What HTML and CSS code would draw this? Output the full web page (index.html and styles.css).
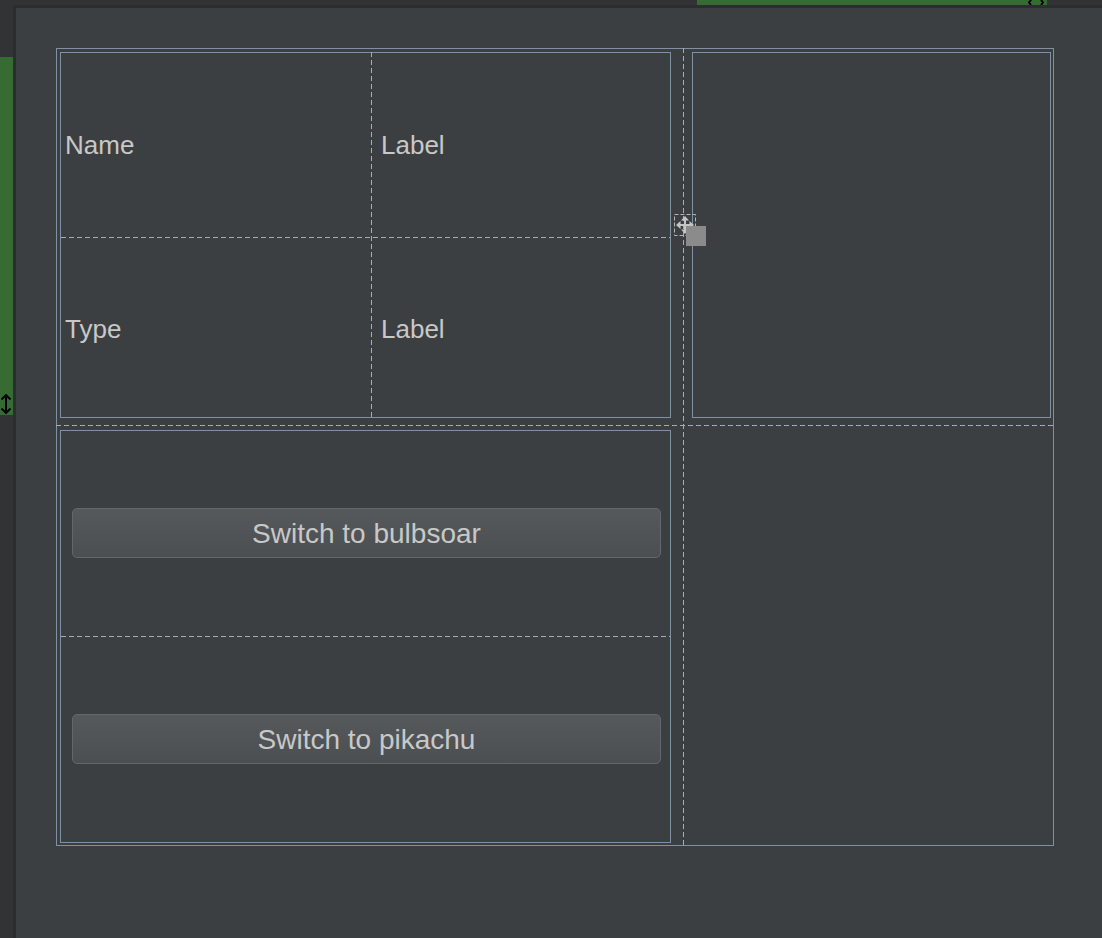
FILE: index.html
```html
<!DOCTYPE html>
<html>
<head>
<meta charset="utf-8">
<link rel="stylesheet" href="styles.css">
</head>
<body>
<div class="app">
  <div class="left-strip">
    <div class="green-left">
      <svg class="arrow-v" width="12" height="20" viewBox="0 0 12 20"><path d="M6 1 L6 19 M1.5 5.5 L6 1 L10.5 5.5 M1.5 14.5 L6 19 L10.5 14.5" fill="none" stroke="#000" stroke-width="2"/></svg>
    </div>
  </div>
  <div class="top-strip">
    <div class="green-top">
      <svg class="arrow-h" width="16" height="5" viewBox="0 0 16 5"><path d="M3 0 L1 2.5 L3 5 M13 0 L15 2.5 L13 5" fill="none" stroke="#000" stroke-width="2"/></svg>
    </div>
  </div>
  <div class="hsep"></div>
  <div class="vsep"></div>
  <div class="canvas">
    <div class="form">
      <div class="cell">
        <div class="panel panel-info">
          <div class="fcell name">Name</div>
          <div class="vd vd-info"></div>
          <div class="fcell label">Label</div>
          <div class="hd hd-info"></div>
          <div class="fcell name row2">Type</div>
          <div class="fcell label row2">Label</div>
        </div>
      </div>
      <div class="vdash"></div>
      <div class="cell">
        <div class="panel panel-image"></div>
      </div>
      <div class="hdash"></div>
      <div class="cell">
        <div class="panel panel-buttons">
          <div class="brow"><button class="btn">Switch to bulbsoar</button></div>
          <div class="hd"></div>
          <div class="brow"><button class="btn">Switch to pikachu</button></div>
        </div>
      </div>
      <div class="cell"></div>
      <div class="handle">
        <svg width="22" height="22" viewBox="0 0 22 22"><rect x="0.5" y="0.5" width="21" height="21" fill="none" stroke="#b4b4b4" stroke-width="1" stroke-dasharray="4 2"/><path d="M11 3 L11 19 M3 11 L19 11" stroke="#c4c4c4" stroke-width="2" fill="none"/><path d="M11 2 L7 6.5 L15 6.5 Z M11 20 L7 15.5 L15 15.5 Z M2 11 L6.5 7 L6.5 15 Z M20 11 L15.5 7 L15.5 15 Z" fill="#c4c4c4"/></svg>
      </div>
      <div class="grip"></div>
    </div>
  </div>
</div>
</body>
</html>
```
FILE: styles.css
```css
html, body {
  margin: 0;
  padding: 0;
  background: #313335;
}
body {
  font-family: "Liberation Sans", Arial, sans-serif;
  color: #c8c8c8;
  overflow: hidden;
}
.app {
  width: 1102px;
  height: 938px;
  display: grid;
  grid-template-columns: 13px 3px 1086px;
  grid-template-rows: 5px 3px 930px;
}
.left-strip {
  grid-column: 1;
  grid-row: 1 / 4;
  background: #313335;
}
.green-left {
  margin-top: 57px;
  height: 358px;
  background: #366b34;
  display: flex;
  flex-direction: column;
  justify-content: flex-end;
  align-items: flex-start;
}
.arrow-v {
  display: block;
  margin: 0 0 1px 0;
}
.top-strip {
  grid-column: 2 / 4;
  grid-row: 1;
  background: #313335;
}
.green-top {
  margin-left: 684px;
  width: 350px;
  height: 5px;
  background: #366b34;
  display: flex;
  justify-content: flex-end;
}
.arrow-h {
  display: block;
  margin-right: 3px;
}
.hsep {
  grid-column: 3;
  grid-row: 2;
  background: #2b2d2f;
}
.vsep {
  grid-column: 2;
  grid-row: 2 / 4;
  background: #2b2d2f;
}
.canvas {
  grid-column: 3;
  grid-row: 3;
  background: #3c3f41;
  padding: 40px;
}
.form {
  position: relative;
  box-sizing: border-box;
  width: 998px;
  height: 798px;
  border: 1px solid #8190a3;
  display: grid;
  grid-template-columns: 626px 1px 369px;
  grid-template-rows: 376px 1px 419px;
}
.cell {
  min-width: 0;
  min-height: 0;
}
.vdash {
  grid-column: 2;
  grid-row: 1 / 4;
  margin: -1px 0;
  background: repeating-linear-gradient(to bottom, #a4acb8 0 5px, transparent 5px 8px);
}
.hdash {
  grid-column: 1 / 4;
  grid-row: 2;
  margin: 0 -1px;
  background: repeating-linear-gradient(to right, #a4acb8 0 5px, transparent 5px 8px);
}
.panel {
  box-sizing: border-box;
  border: 1px solid #8190a3;
}
.panel-info {
  margin: 3px 0 0 3px;
  width: 611px;
  height: 366px;
  display: grid;
  grid-template-columns: 310px 1px 298px;
  grid-template-rows: 184px 1px 179px;
}
.vd-info {
  grid-column: 2;
  grid-row: 1 / 4;
  margin: -1px 0;
  background: repeating-linear-gradient(to bottom, #a4acb8 0 5px, transparent 5px 8px);
}
.hd-info {
  grid-column: 1 / 4;
  grid-row: 2;
}
.hd {
  background: repeating-linear-gradient(to right, #a4acb8 0 5px, transparent 5px 8px);
}
.fcell {
  display: flex;
  align-items: center;
  font-size: 26px;
  color: #c8c8c8;
}
.fcell.row2 {
  padding-top: 3px;
}
.fcell.name {
  padding-left: 4px;
}
.fcell.label {
  padding-left: 9px;
}
.panel-image {
  margin: 3px 0 0 8px;
  width: 359px;
  height: 366px;
}
.panel-buttons {
  margin: 4px 0 0 3px;
  width: 611px;
  height: 413px;
  display: grid;
  grid-template-rows: 205px 1px 205px;
}
.brow {
  display: flex;
  align-items: center;
  padding-left: 11px;
  padding-bottom: 2px;
}
.btn {
  box-sizing: border-box;
  width: 589px;
  height: 50px;
  border: 1px solid #63676a;
  border-radius: 5px;
  background: linear-gradient(to bottom, #55595c, #4b4f51);
  color: #c8c8c8;
  font-family: "Liberation Sans", Arial, sans-serif;
  font-size: 28px;
  padding: 2px 0 0 0;
  margin: 0;
}
.handle {
  position: absolute;
  left: 617px;
  top: 165px;
  width: 22px;
  height: 22px;
}
.handle svg {
  display: block;
}
.grip {
  position: absolute;
  left: 629px;
  top: 177px;
  width: 20px;
  height: 20px;
  background: #8b8b8b;
}
```
